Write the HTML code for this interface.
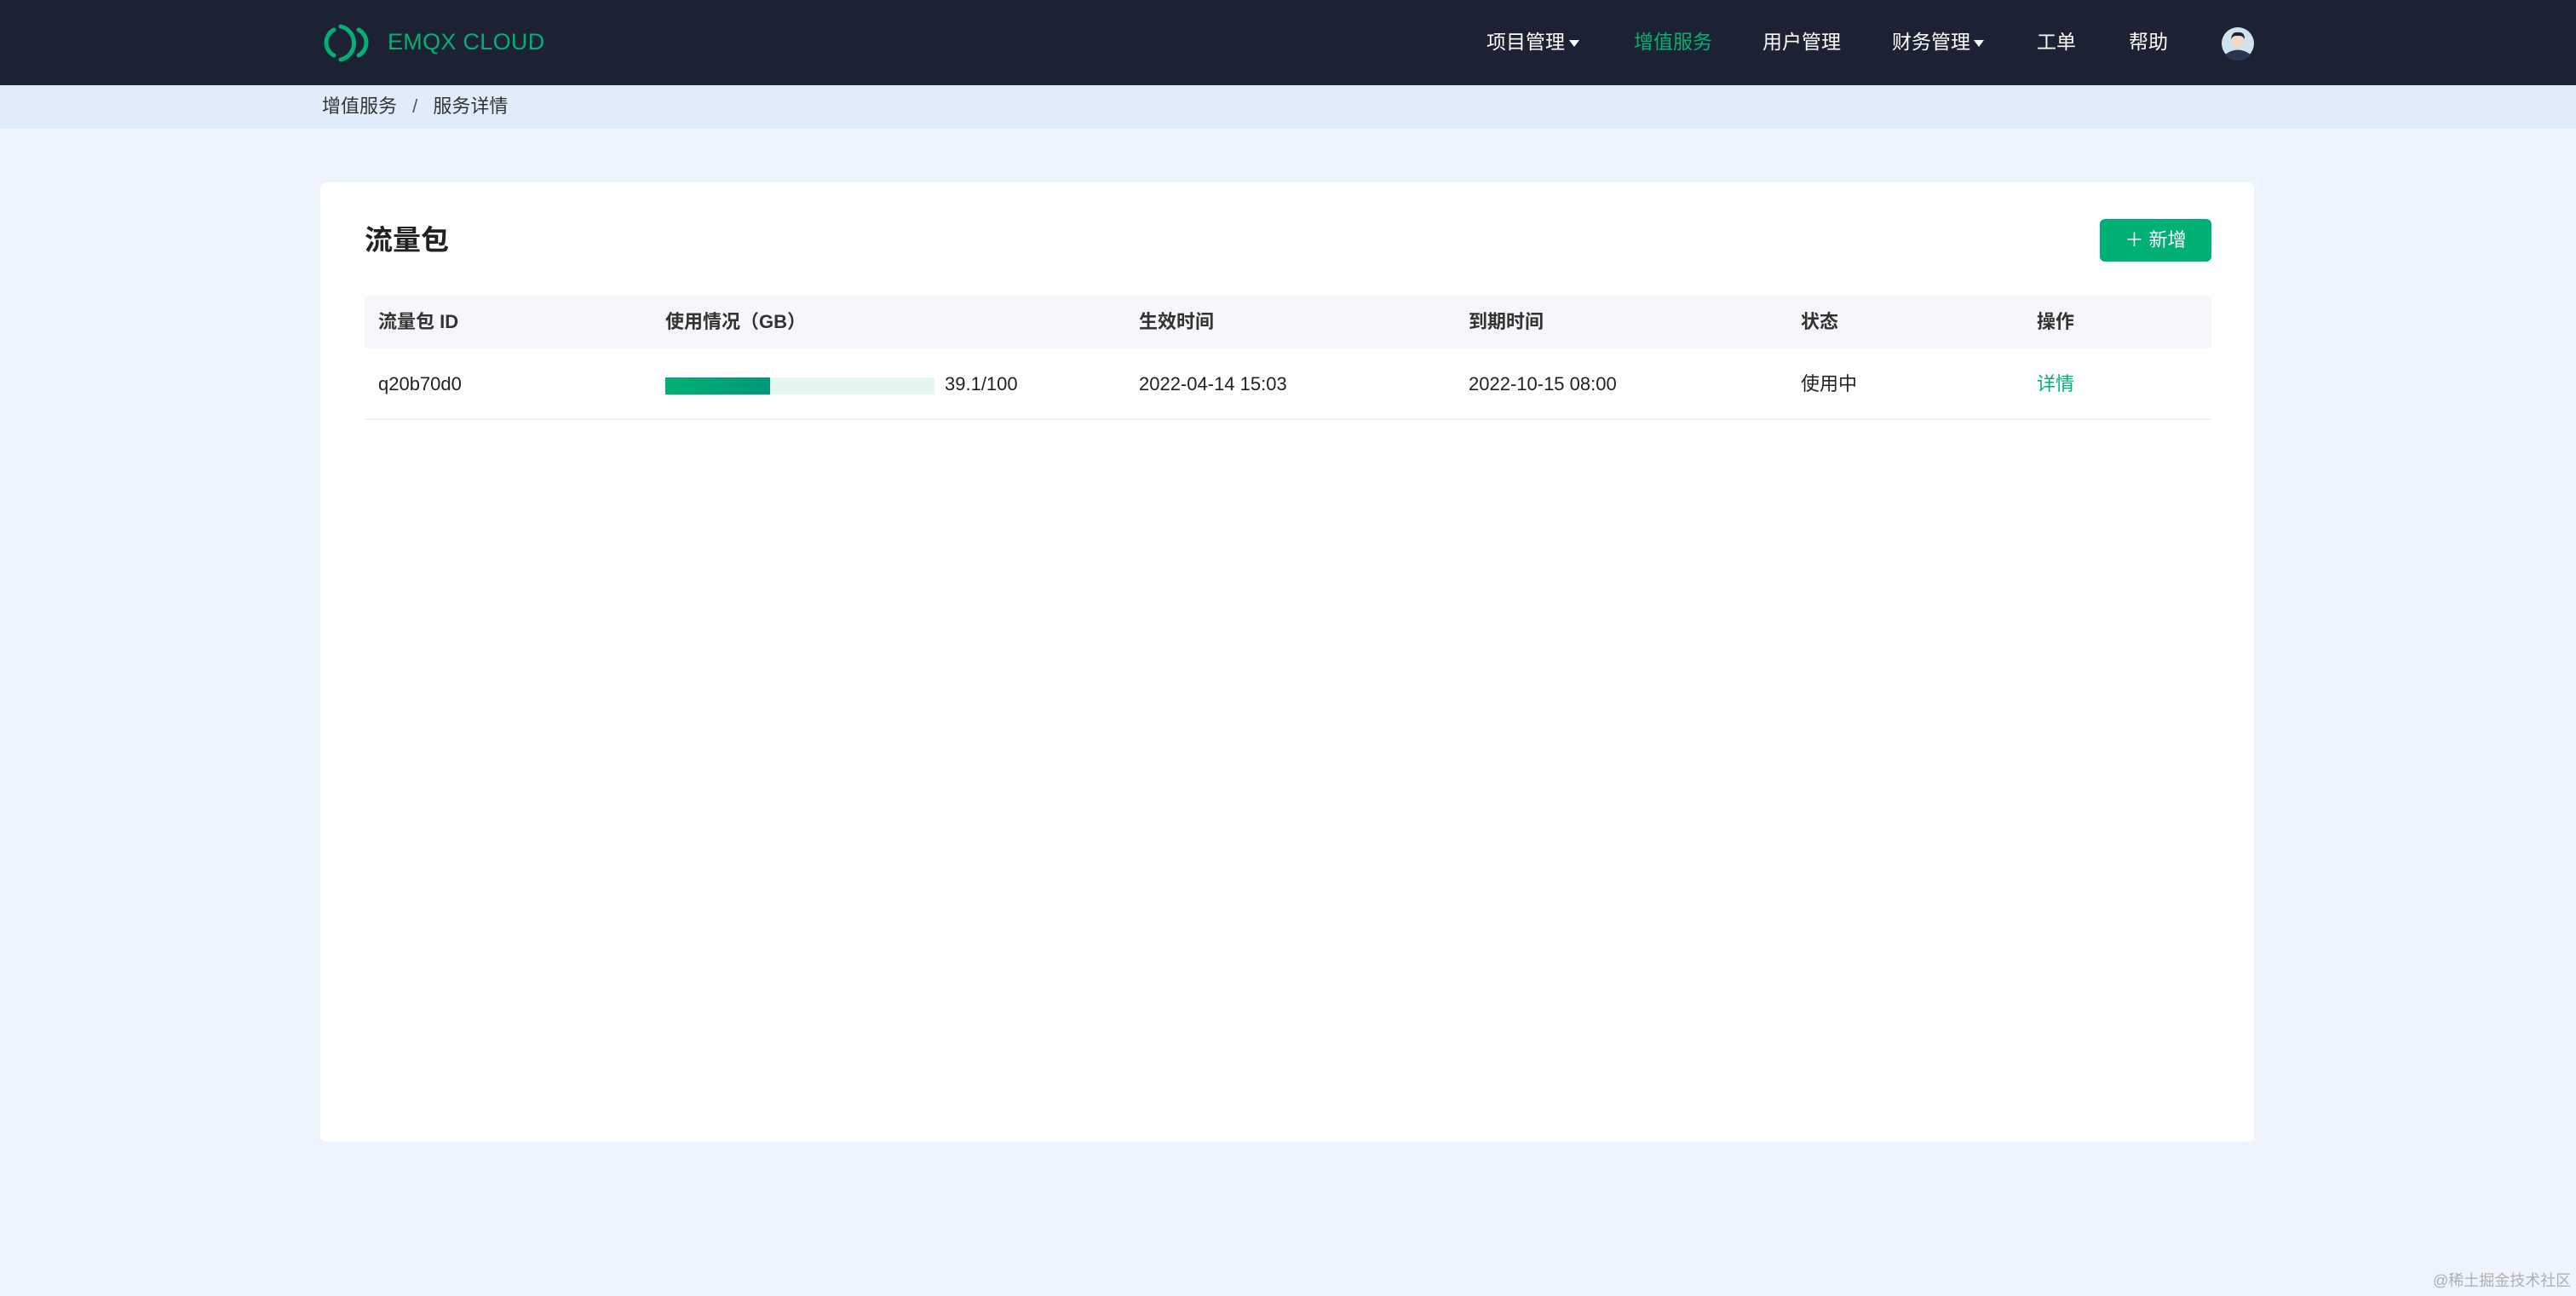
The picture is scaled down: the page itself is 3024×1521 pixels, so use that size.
<!DOCTYPE html>
<html><head><meta charset="utf-8"><style>
*{margin:0;padding:0;box-sizing:border-box}
body{width:3024px;height:1521px;background:#edf4fd;font-family:"Liberation Sans","Noto Sans CJK SC",sans-serif;position:relative;overflow:hidden;color:#2b2b2b}
.nav{position:absolute;left:0;top:0;width:3024px;height:100px;background:#1d2134}
.a{position:absolute;white-space:nowrap;line-height:1}
.ni{color:#fff;font-size:23px;top:38px}
.arr{position:absolute;top:47px;width:0;height:0;border-left:6px solid transparent;border-right:6px solid transparent;border-top:8px solid #fff}
.bc{position:absolute;left:0;top:100px;width:3024px;height:51px;background:#e1ecfa}
.card{position:absolute;left:376px;top:214px;width:2270px;height:1126px;background:#fff;border-radius:8px}
.th{font-size:22px;font-weight:bold;color:#333;top:367px}
.td{font-size:22px;color:#222;top:440px}
</style></head><body>
<div class="nav"></div>
<svg class="a" style="left:374px;top:26px" width="66" height="50" viewBox="0 0 66 50">
<path d="M18 9 A17 17 0 0 0 18 39" fill="none" stroke="#00b173" stroke-width="5" stroke-linecap="round"/>
<path d="M26 5 A20 20 0 0 1 26 44" fill="none" stroke="#00b173" stroke-width="5" stroke-linecap="round"/>
<path d="M47 9 A17 17 0 0 1 47 39" fill="none" stroke="#00b173" stroke-width="5" stroke-linecap="round"/>
</svg>
<div class="a" style="left:455px;top:36px;font-size:27px;color:#00b173;letter-spacing:0.3px">EMQX CLOUD</div>
<div class="a ni" style="left:1745px">项目管理</div><div class="arr" style="left:1842px"></div>
<div class="a ni" style="left:1918px;color:#00b173">增值服务</div>
<div class="a ni" style="left:2069px">用户管理</div>
<div class="a ni" style="left:2221px">财务管理</div><div class="arr" style="left:2317px"></div>
<div class="a ni" style="left:2391px">工单</div>
<div class="a ni" style="left:2499px">帮助</div>
<svg class="a" style="left:2607px;top:31px" width="40" height="40" viewBox="0 0 40 40">
<circle cx="20" cy="20" r="19" fill="#cfe3ec"/>
<path d="M5 33 Q20 22 35 33 A19 19 0 0 1 5 33Z" fill="#2a3552"/>
<ellipse cx="20" cy="17" rx="7" ry="8" fill="#f2d9c6"/>
<path d="M12 15 Q13 6 20 7 Q28 6 28 15 Q25 10 20 11 Q15 10 12 15Z" fill="#1d2134"/>
</svg>
<div class="bc"></div>
<div class="a" style="left:378px;top:114px;font-size:22px;color:#333">增值服务 <span style="margin:0 12px;color:#555">/</span> 服务详情</div>
<div class="card"></div>
<div class="a" style="left:428px;top:265px;font-size:33px;font-weight:bold;color:#222">流量包</div>
<div class="a" style="left:2465px;top:257px;width:131px;height:50px;background:#00b173;border-radius:6px;color:#fff;font-size:22px;line-height:50px;text-align:center">＋ 新增</div>
<div class="a" style="left:428px;top:347px;width:2168px;height:62px;background:#f5f7fa;border-radius:4px"></div>
<div class="a th" style="left:444px">流量包 ID</div>
<div class="a th" style="left:781px">使用情况（GB）</div>
<div class="a th" style="left:1337px">生效时间</div>
<div class="a th" style="left:1724px">到期时间</div>
<div class="a th" style="left:2114px">状态</div>
<div class="a th" style="left:2391px">操作</div>
<div class="a td" style="left:444px">q20b70d0</div>
<div class="a" style="left:781px;top:443px;width:316px;height:20px;background:#e3f7ef"></div>
<div class="a" style="left:781px;top:443px;width:123px;height:20px;background:linear-gradient(90deg,#00b173,#00987a)"></div>
<div class="a td" style="left:1109px">39.1/100</div>
<div class="a td" style="left:1337px">2022-04-14 15:03</div>
<div class="a td" style="left:1724px">2022-10-15 08:00</div>
<div class="a td" style="left:2114px">使用中</div>
<div class="a td" style="left:2391px;color:#00b173">详情</div>
<div class="a" style="left:428px;top:491px;width:2168px;height:2px;background:#eef0f3"></div>
<div class="a" style="left:2856px;top:1494px;font-size:18px;color:#b0b0b0">@稀土掘金技术社区</div>
</body></html>
